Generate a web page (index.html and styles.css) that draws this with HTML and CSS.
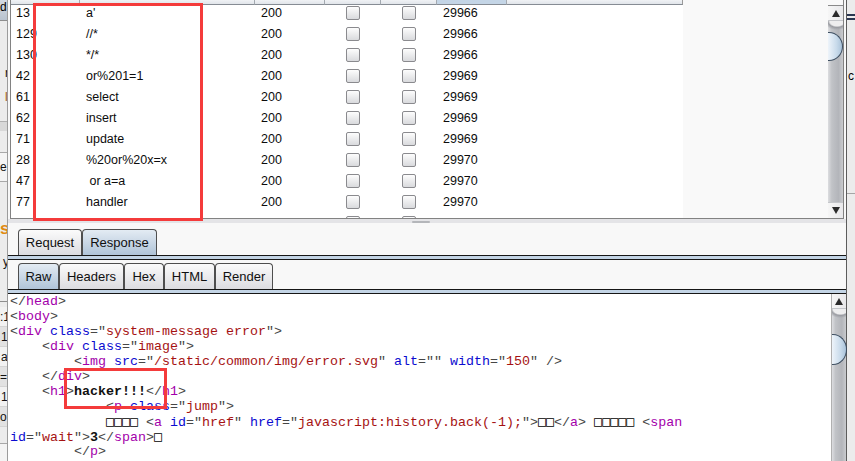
FILE: index.html
```html
<!DOCTYPE html>
<html>
<head>
<meta charset="utf-8">
<title>Intruder result</title>
<link rel="stylesheet" href="styles.css">
</head>
<body>
<div class="screen">
  <div class="bgleft">
    <div class="lb-btn">d</div>
    <div class="lb-line"></div>
    <div class="lb-gap g44"></div>
    <div class="lb-txt ind5">r</div>
    <div class="lb-gap g8"></div>
    <div class="lb-txt ind5 brown">l</div>
    <div class="lb-gap g16"></div>
    <div class="lb-band"></div>
    <div class="lb-gap g21"></div>
    <div class="lb-box">e</div>
    <div class="lb-gap g35"></div>
    <div class="lb-s">s</div>
    <div class="lb-gap g9"></div>
    <div class="lb-y">y</div>
    <div class="lb-gap g27"></div>
    <div class="lb-line"></div>
    <div class="lb-gap g5"></div>
    <div class="lb-row">:1</div>
    <div class="lb-row alt ind1">1</div>
    <div class="lb-row ind1">a</div>
    <div class="lb-row alt">=</div>
    <div class="lb-row ind1">1</div>
    <div class="lb-row alt">o</div>
    <div class="lb-rest"></div>
  </div>
  <div class="vsep"></div>

  <div class="main">
    <div class="tablepane">
      <div class="viewport">
        <div class="thead">
          <div class="th c1"></div><div class="th c2"></div><div class="th c3"></div><div class="th c4"></div><div class="th c5"></div><div class="th c6 sel"></div><div class="th c7"></div>
        </div>
        <div class="tbody">
          <div class="row"><div class="td c1">13</div><div class="td c2">a'</div><div class="td c3">200</div><div class="td c4"><span class="cb"></span></div><div class="td c5"><span class="cb"></span></div><div class="td c6">29966</div><div class="td c7"></div></div>
          <div class="row"><div class="td c1">129</div><div class="td c2">//*</div><div class="td c3">200</div><div class="td c4"><span class="cb"></span></div><div class="td c5"><span class="cb"></span></div><div class="td c6">29966</div><div class="td c7"></div></div>
          <div class="row"><div class="td c1">130</div><div class="td c2">*/*</div><div class="td c3">200</div><div class="td c4"><span class="cb"></span></div><div class="td c5"><span class="cb"></span></div><div class="td c6">29966</div><div class="td c7"></div></div>
          <div class="row"><div class="td c1">42</div><div class="td c2">or%201=1</div><div class="td c3">200</div><div class="td c4"><span class="cb"></span></div><div class="td c5"><span class="cb"></span></div><div class="td c6">29969</div><div class="td c7"></div></div>
          <div class="row"><div class="td c1">61</div><div class="td c2">select</div><div class="td c3">200</div><div class="td c4"><span class="cb"></span></div><div class="td c5"><span class="cb"></span></div><div class="td c6">29969</div><div class="td c7"></div></div>
          <div class="row"><div class="td c1">62</div><div class="td c2">insert</div><div class="td c3">200</div><div class="td c4"><span class="cb"></span></div><div class="td c5"><span class="cb"></span></div><div class="td c6">29969</div><div class="td c7"></div></div>
          <div class="row"><div class="td c1">71</div><div class="td c2">update</div><div class="td c3">200</div><div class="td c4"><span class="cb"></span></div><div class="td c5"><span class="cb"></span></div><div class="td c6">29969</div><div class="td c7"></div></div>
          <div class="row"><div class="td c1">28</div><div class="td c2">%20or%20x=x</div><div class="td c3">200</div><div class="td c4"><span class="cb"></span></div><div class="td c5"><span class="cb"></span></div><div class="td c6">29970</div><div class="td c7"></div></div>
          <div class="row"><div class="td c1">47</div><div class="td c2">&nbsp;or a=a</div><div class="td c3">200</div><div class="td c4"><span class="cb"></span></div><div class="td c5"><span class="cb"></span></div><div class="td c6">29970</div><div class="td c7"></div></div>
          <div class="row"><div class="td c1">77</div><div class="td c2">handler</div><div class="td c3">200</div><div class="td c4"><span class="cb"></span></div><div class="td c5"><span class="cb"></span></div><div class="td c6">29970</div><div class="td c7"></div></div>
          <div class="row"><div class="td c1">9</div><div class="td c2">droptable</div><div class="td c3">200</div><div class="td c4"><span class="cb"></span></div><div class="td c5"><span class="cb"></span></div><div class="td c6">29971</div><div class="td c7"></div></div>
        </div>
      </div>
      <div class="vscroll top">
        <div class="sb-up"><span class="tri-up"></span></div>
        <div class="sb-track"><div class="sb-thumb t1"></div></div>
        <div class="sb-down"><span class="tri-down"></span></div>
      </div>
    </div>

    <div class="splitter"><div class="grip"></div></div>

    <div class="tabs">
      <div class="tab w64">Request</div>
      <div class="tab sel w75">Response</div>
    </div>
    <div class="band"></div>
    <div class="pane">
      <div class="tabs">
        <div class="tab sel w41">Raw</div>
        <div class="tab w65">Headers</div>
        <div class="tab w40">Hex</div>
        <div class="tab w51">HTML</div>
        <div class="tab w58">Render</div>
      </div>
      <div class="band"></div>
      <div class="editor">
        <div class="code">
<div class="ln"><span class="p">&lt;/</span><span class="t">head</span><span class="p">&gt;</span></div>
<div class="ln"><span class="p">&lt;</span><span class="t">body</span><span class="p">&gt;</span></div>
<div class="ln"><span class="p">&lt;</span><span class="t">div</span> <span class="a">class</span><span class="p">="</span><span class="v">system-message error</span><span class="p">"&gt;</span></div>
<div class="ln">    <span class="p">&lt;</span><span class="t">div</span> <span class="a">class</span><span class="p">="</span><span class="v">image</span><span class="p">"&gt;</span></div>
<div class="ln">        <span class="p">&lt;</span><span class="t">img</span> <span class="a">src</span><span class="p">="</span><span class="v">/static/common/img/error.svg</span><span class="p">"</span> <span class="a">alt</span><span class="p">=""</span> <span class="a">width</span><span class="p">="</span><span class="v">150</span><span class="p">" /&gt;</span></div>
<div class="ln">    <span class="p">&lt;/</span><span class="t">div</span><span class="p">&gt;</span></div>
<div class="ln">    <span class="p">&lt;</span><span class="t">h1</span><span class="p">&gt;</span><span class="b">hacker!!!</span><span class="p">&lt;/</span><span class="t">h1</span><span class="p">&gt;</span></div>
<div class="ln">            <span class="p">&lt;</span><span class="t">p</span> <span class="a">class</span><span class="p">="</span><span class="v">jump</span><span class="p">"&gt;</span></div>
<div class="ln">            <span class="bx">□□□□</span> <span class="p">&lt;</span><span class="t">a</span> <span class="a">id</span><span class="p">="</span><span class="v">href</span><span class="p">"</span> <span class="a">href</span><span class="p">="</span><span class="v">javascript:history.back(-1);</span><span class="p">"&gt;</span><span class="bx">□□</span><span class="p">&lt;/</span><span class="t">a</span><span class="p">&gt;</span> <span class="bx">□□□□□</span> <span class="p">&lt;</span><span class="t">span</span></div>
<div class="ln"><span class="a">id</span><span class="p">="</span><span class="v">wait</span><span class="p">"&gt;</span><span class="b">3</span><span class="p">&lt;/</span><span class="t">span</span><span class="p">&gt;</span><span class="bx">□</span></div>
<div class="ln">        <span class="p">&lt;/</span><span class="t">p</span><span class="p">&gt;</span></div>
        </div>
        <div class="vscroll low">
          <div class="sb-up"><span class="tri-up"></span></div>
          <div class="sb-track"><div class="sb-thumb t2"></div></div>
        </div>
      </div>
    </div>
  </div>

  <div class="vsep dark"></div>
  <div class="bgright">
    <div class="rb-gap g14"></div>
    <div class="rb-eq"></div>
    <div class="rb-gap g48"></div>
    <div class="rb-c">c</div>
    <div class="rb-gap g109"></div>
    <div class="rb-line"></div>
  </div>

  <div class="mark m1"></div>
  <div class="mark m2"></div>
</div>
</body>
</html>
```

FILE: styles.css
```css
* { box-sizing: border-box; margin: 0; padding: 0; }
html, body { width: 855px; height: 461px; overflow: hidden; background: #f0f0f0; }

.screen {
  position: relative;
  display: flex;
  width: 855px;
  height: 461px;
  font-family: "Liberation Sans", Arial, sans-serif;
  color: #111;
}

/* background window on the left */
.bgleft {
  width: 7px; flex: none; display: flex; flex-direction: column;
  background: #ececec; overflow: hidden; font-size: 12px; white-space: nowrap;
}
.lb-btn { height: 20px; background: linear-gradient(#d3d9e1, #b9c3cf); line-height: 15px; padding-left: 0; color: #000; flex: none; }
.lb-line { height: 1px; background: #8e8e8e; flex: none; }
.lb-gap { flex: none; }
.g44 { height: 44px; } .g8 { height: 8px; } .g16 { height: 16px; } .g21 { height: 21px; }
.g35 { height: 35px; } .g9 { height: 9px; } .g27 { height: 27px; } .g5 { height: 5px; }
.lb-txt { height: 16px; line-height: 16px; flex: none; }
.ind5 { text-indent: 5px; }
.ind1 { text-indent: 1px; }
.brown { color: #9a5a12; }
.lb-band { height: 10px; background: #d8d8d8; border-top: 1px solid #b0b0b0; flex: none; }
.lb-box { height: 30px; line-height: 28px; border-top: 1px solid #a8a8a8; border-bottom: 1px solid #a8a8a8; background: #f4f4f4; flex: none; }
.lb-s { height: 24px; line-height: 24px; font-size: 17px; font-weight: bold; color: #e08a10; flex: none; }
.lb-y { height: 24px; line-height: 24px; text-indent: 3px; flex: none; }
.lb-row { height: 20px; line-height: 20px; flex: none; background: #f2f2f2; border-bottom: 1px solid #d4d4d4; }
.lb-row.alt { background: #e2e2e2; }
.lb-rest { flex: 1; background: linear-gradient(#ececec 0 16px, #a8a8a8 16px 17px, #f4f4f4 17px); }

.vsep { width: 1px; flex: none; background: #9c9c9c; }
.vsep.dark { background: #5c5c5c; }

/* main window */
.main {
  width: 838px; flex: none; display: flex; flex-direction: column;
  background: #f8f8f8;
}

.tablepane {
  margin-left: 2px; width: 834px; height: 219px; flex: none;
  display: flex;
  border-left: 1px solid #828282; border-right: 1px solid #828282; border-bottom: 1px solid #828282;
  background: #f9f9f9;
}
.viewport { width: 817px; display: flex; flex-direction: column; overflow: hidden; }
.thead { display: flex; height: 5px; flex: none; }
.th {
  height: 5px; border-right: 1px solid #a3a9b0; border-bottom: 1px solid #868c94;
  background: linear-gradient(#f0f2f5, #e1e5ea);
}
.th.sel { background: #c4d5e6; }
.th.c7 { border-right: 1px solid #9a9a9a; }

.c1 { width: 69px; } .c2 { width: 175px; } .c3 { width: 70px; } .c4 { width: 56px; }
.c5 { width: 56px; } .c6 { width: 70px; } .c7 { width: 176px; }

.tbody { flex: 1; overflow: hidden; }
.row { display: flex; height: 21px; }
.td {
  height: 21px; background: #fff; font-size: 12.5px; line-height: 16px;
  padding: 0 0 5px 6px; white-space: pre; color: #0c0c0c;
}
.td.c1 { padding-left: 5px; }
.td.c4, .td.c5 { display: flex; justify-content: center; padding: 1px 0 0 0; }
.cb {
  display: block; width: 14px; height: 14px; border: 1px solid #8a8a8e; border-radius: 2px;
  background: linear-gradient(#fdfdfd, #d9dadd);
}

/* scrollbars */
.vscroll {
  width: 15px; flex: none; display: flex; flex-direction: column;
}
.vscroll.top { margin-top: 5px; border-top: 1px solid #8a8a8a; }
.sb-up, .sb-down {
  height: 15px; flex: none; display: flex; align-items: center; justify-content: center;
  background: linear-gradient(to right, #f6f6f6, #e8e8ea);
}
.sb-up { border-bottom: 1px solid #c4c6ca; }
.sb-down { border-top: 1px solid #c4c6ca; height: 16px; }
.tri-up { width: 0; height: 0; border-left: 4px solid transparent; border-right: 4px solid transparent; border-bottom: 7px solid #2a2a2a; }
.tri-down { width: 0; height: 0; border-left: 4px solid transparent; border-right: 4px solid transparent; border-top: 7px solid #2a2a2a; }
.sb-track {
  flex: 1; position: relative;
  background:
    radial-gradient(ellipse 13px 9px at 60% 0, #eeeeef 0 55%, rgba(150,152,158,.9) 70%, rgba(190,192,196,0) 100%),
    linear-gradient(to right, #dcdde0 0, #c1c3c7 25%, #b3b5ba 70%, #c9cbce 100%);
  background-repeat: no-repeat;
  background-size: 100% 14px, 100% 100%;
}
.sb-thumb {
  width: 15px; border: 1px solid #3e4f61; border-left: none;
  border-radius: 0 14px 14px 0 / 0 50% 50% 0;
  background: linear-gradient(to right, #eef4fa, #c9dbeb 60%, #aac3da);
}
.t1 { height: 29px; margin-top: 11px; }
.t2 { height: 31px; margin-top: 25px; }

.splitter {
  height: 10px; flex: none; display: flex; justify-content: center;
  background: linear-gradient(#e4e4e7 0 4px, #f8f8f8 4px);
}
.grip { width: 18px; height: 2px; margin-top: 2px; border-radius: 1px; background: #b4b6ba; margin-left: -13px; }

/* tabs */
.tabs { display: flex; height: 26px; flex: none; padding-left: 10px; }
.tab {
  height: 26px; border: 1px solid #4e4e4e; border-bottom: none;
  border-radius: 4px 4px 0 0;
  background: linear-gradient(#fbfbfb, #dcdce0);
  font-size: 13px; line-height: 25px; text-align: center; color: #101010;
}
.tab.sel { background: linear-gradient(#e3ebf3, #b0c4d8); }
.w64 { width: 64px; } .w75 { width: 75px; } .w41 { width: 41px; } .w65 { width: 65px; }
.w40 { width: 40px; } .w51 { width: 51px; } .w58 { width: 58px; }

.band {
  height: 5px; flex: none; background: #c3d4e5;
  border-top: 1px solid #161616; border-bottom: 1px solid #161616;
}
.pane { flex: 1; display: flex; flex-direction: column; padding-top: 3px; min-height: 0; }

.editor { flex: 1; display: flex; min-height: 0; }
.code {
  width: 823px; background: #fff; padding-left: 2px; overflow: hidden;
  font-family: "Liberation Mono", "Courier New", monospace; font-size: 13.33px; line-height: 15px;
  color: #111;
}
.ln { height: 15px; white-space: pre; }
.p { color: #464646; }
.t { color: #a300ab; }
.a { color: #0b0bd0; }
.v { color: #a51212; }
.b { font-weight: bold; color: #111; }
.bx { font-family: "DejaVu Sans Mono", monospace; color: #000; font-size: 13.33px; }
.vscroll.low { border-left: 1px solid #b0b0b0; }

/* background window on the right */
.bgright { width: 8px; flex: none; display: flex; flex-direction: column; background: #ececec; overflow: hidden; font-size: 12px; }
.rb-gap { flex: none; }
.g14 { height: 14px; } .g48 { height: 48px; } .g109 { height: 109px; }
.rb-eq { height: 6px; border-top: 2px solid #2a3650; border-bottom: 2px solid #2a3650; flex: none; }
.rb-c { height: 16px; line-height: 16px; padding-left: 1px; flex: none; color: #000; }
.rb-line { height: 1px; background: #a6a6a6; flex: none; }

/* red highlight boxes */
.mark { position: absolute; border: 3px solid #f43b3b; }
.m1 { left: 33px; top: 3px; width: 170px; height: 218px; }
.m2 { left: 64px; top: 368px; width: 103px; height: 41px; }
```
